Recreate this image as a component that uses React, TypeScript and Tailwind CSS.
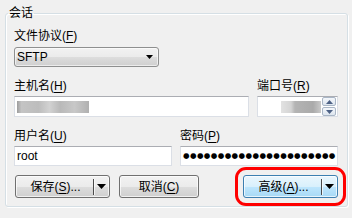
import React from "react";

// Win7-style session panel (WinSCP login)

function Hotkey({ text, k, tail = "" }: { text: string; k: string; tail?: string }) {
    return (
        <span>
            {text}(<span className="underline underline-offset-[2px]">{k}</span>){tail}
        </span>
    );
}

function DownArrow() {
    return (
        <svg width="9" height="5" viewBox="0 0 9 5" className="block">
            <path d="M0 0H9L4.5 5Z" fill="#000" />
        </svg>
    );
}

function SplitButton({ label, k, primary = false }: { label: string; k: string; primary?: boolean }) {
    const skin = primary
        ? "border-[#3c7fb1] bg-[linear-gradient(to_bottom,#eaf6fd_0%,#d9f0fc_50%,#bee6fd_51%,#a7d9f5_100%)] outline-[3px] outline-[#ff0000] outline-offset-[5px] outline-solid"
        : "border-[#707070] bg-[linear-gradient(to_bottom,#f2f2f2_0%,#ebebeb_50%,#dddddd_51%,#cfcfcf_100%)]";
    return (
        <div className={`flex h-[23px] w-[95px] items-center rounded-[3px] border shadow-[inset_0_0_0_1px_rgba(255,255,255,0.7)] ${skin}`}>
            <div className="flex flex-1 justify-center pl-[2px]">
                <Hotkey text={label} k={k} tail="..." />
            </div>
            <div className="h-[16px] w-[2px] border-l border-[#4a4a4a] bg-white/70" />
            <div className="flex w-[14px] justify-center pr-[1px]">
                <DownArrow />
            </div>
        </div>
    );
}

function TextBox({ className = "", children }: { className?: string; children?: React.ReactNode }) {
    return (
        <div className={`flex items-center border border-[#dbdfe6] border-t-[#abadb3] bg-white ${className}`}>
            {children}
        </div>
    );
}

export default function App() {
    return (
        <div className="h-[218px] w-[352px] bg-[#f0f0f0] pt-[5px] text-[12px] leading-4 text-black font-['Liberation_Sans','Noto_Sans_CJK_SC',sans-serif]">
            <fieldset className="mx-[5px] rounded-[3px] border border-[#d5dfe5] pb-[8px] pl-[8px] pr-[9px] shadow-[inset_1px_1px_0_#fff,1px_1px_0_#fff]">
                <legend className="ml-[-6px] px-[1px] leading-4">会话</legend>

                <div className="mt-[7px]">
                    <Hotkey text="文件协议" k="F" />
                </div>
                <div className="mt-[3px] flex h-[20px] w-[145px] items-center rounded-[3px] border border-[#8e8f8f] bg-[linear-gradient(to_bottom,#f2f2f2_0%,#ebebeb_50%,#dddddd_51%,#cfcfcf_100%)] pl-[2px] pr-[5px] shadow-[inset_0_0_0_1px_rgba(255,255,255,0.6)]">
                    <span className="flex-1">SFTP</span>
                    <svg width="7" height="4" viewBox="0 0 7 4" className="block">
                        <path d="M0 0H7L3.5 4Z" fill="#000" />
                    </svg>
                </div>

                <div className="mt-[11px] grid grid-cols-[235px_81px] gap-x-[8px]">
                    <Hotkey text="主机名" k="H" />
                    <Hotkey text="端口号" k="R" />
                    <TextBox className="mt-[2px] h-[21px] pl-[2px]">
                        <div className="h-[12px] w-[72px] bg-[linear-gradient(to_right,#9c9c9c_0%,#c4c4c4_6%,#bdbdbd_30%,#d2d2d2_45%,#b9b9b9_60%,#c8c8c8_80%,#b0b0b0_100%)] blur-[0.6px]" />
                    </TextBox>
                    <TextBox className="mt-[2px] h-[21px] pr-[1px]">
                        <div className="flex flex-1 justify-end pr-[1px]">
                            <div className="h-[12px] w-[40px] bg-[linear-gradient(to_right,#e2e2e2_0%,#d4d4d4_25%,#b4b4b4_35%,#aaaaaa_80%,#c9c9c9_100%)] blur-[0.6px]" />
                        </div>
                        <div className="flex h-[19px] w-[14px] flex-col gap-[1px]">
                            <div className="flex flex-1 items-center justify-center rounded-[2px] border border-[#a9b6c6] bg-[linear-gradient(to_bottom,#f4f7fb,#dde5ee)]">
                                <svg width="7" height="4" viewBox="0 0 7 4" className="block">
                                    <path d="M0 4H7L3.5 0Z" fill="#4d6185" />
                                </svg>
                            </div>
                            <div className="flex flex-1 items-center justify-center rounded-[2px] border border-[#a9b6c6] bg-[linear-gradient(to_bottom,#f4f7fb,#dde5ee)]">
                                <svg width="7" height="4" viewBox="0 0 7 4" className="block">
                                    <path d="M0 0H7L3.5 4Z" fill="#4d6185" />
                                </svg>
                            </div>
                        </div>
                    </TextBox>
                </div>

                <div className="mt-[11px] grid grid-cols-2 gap-x-[8px]">
                    <Hotkey text="用户名" k="U" />
                    <Hotkey text="密码" k="P" />
                    <TextBox className="mt-[2px] h-[20px] pl-[2px]">root</TextBox>
                    <TextBox className="mt-[2px] h-[20px] pl-[2px]">
                        <span className="whitespace-nowrap text-[7.5px] tracking-[0.4px] font-['DejaVu_Sans',sans-serif]">
                            {"●".repeat(22)}
                        </span>
                    </TextBox>
                </div>

                <div className="mt-[9px] flex items-center pl-[1px]">
                    <SplitButton label="保存" k="S" />
                    <div className="ml-[9px] flex h-[23px] w-[80px] items-center justify-center rounded-[3px] border border-[#707070] bg-[linear-gradient(to_bottom,#f2f2f2_0%,#ebebeb_50%,#dddddd_51%,#cfcfcf_100%)] shadow-[inset_0_0_0_1px_rgba(255,255,255,0.7)]">
                        <Hotkey text="取消" k="C" />
                    </div>
                    <div className="ml-auto">
                        <SplitButton label="高级" k="A" primary />
                    </div>
                </div>
            </fieldset>
        </div>
    );
}
